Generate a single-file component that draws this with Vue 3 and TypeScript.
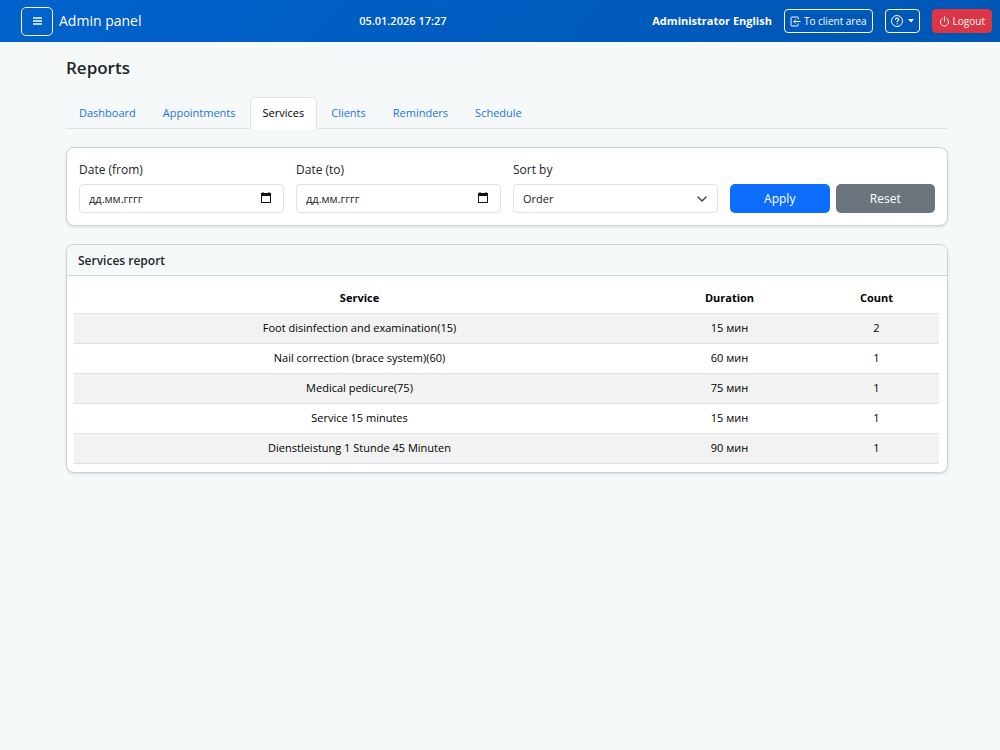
<script setup lang="ts">
import { ref } from 'vue'

interface ReportRow {
  service: string
  duration: number
  count: number
}

const tabs: string[] = ['Dashboard', 'Appointments', 'Services', 'Clients', 'Reminders', 'Schedule']
const activeTab = ref('Services')
const dateFrom = ref('')
const dateTo = ref('')
const sortBy = ref('Order')

const rows: ReportRow[] = [
  { service: 'Foot disinfection and examination(15)', duration: 15, count: 2 },
  { service: 'Nail correction (brace system)(60)', duration: 60, count: 1 },
  { service: 'Medical pedicure(75)', duration: 75, count: 1 },
  { service: 'Service 15 minutes', duration: 15, count: 1 },
  { service: 'Dienstleistung 1 Stunde 45 Minuten', duration: 90, count: 1 },
]

function reset(): void {
  dateFrom.value = ''
  dateTo.value = ''
  sortBy.value = 'Order'
}
</script>

<template>
  <div class="app">
    <header class="navbar">
      <div class="brand">
        <button type="button" class="menu-btn" aria-label="Menu">
          <svg width="9" height="8" viewBox="0 0 9 8" fill="currentColor" aria-hidden="true">
            <path d="M0 0h9v2H0zM0 3h9v2H0zM0 6h9v2H0z" />
          </svg>
        </button>
        <span class="brand-name">Admin panel</span>
      </div>
      <time class="clock" datetime="2026-01-05T17:27">05.01.2026 17:27</time>
      <div class="account">
        <strong class="user">Administrator English</strong>
        <a href="#" class="nav-btn">
          <svg width="11" height="11" viewBox="0 0 16 16" fill="none" stroke="currentColor" stroke-width="1.4" aria-hidden="true">
            <path d="M12 5V2.5a1 1 0 0 0-1-1H2.5a1 1 0 0 0-1 1v11a1 1 0 0 0 1 1H11a1 1 0 0 0 1-1V11M15.5 8H5.5M8.5 5l-3 3 3 3" />
          </svg>
          <span>To client area</span>
        </a>
        <button type="button" class="nav-btn" aria-label="Help">
          <svg width="12" height="12" viewBox="0 0 16 16" fill="none" stroke="currentColor" stroke-width="1.3" aria-hidden="true">
            <circle cx="8" cy="8" r="7.3" />
            <path d="M5.8 6.2C5.8 4.8 6.7 4.1 8 4.1s2.3.8 2.3 2c0 1.6-2.2 1.7-2.2 3.6M8.1 10.9v1.5" stroke-width="1.5" />
          </svg>
          <svg class="caret" width="6" height="4" viewBox="0 0 6 4" fill="currentColor" aria-hidden="true">
            <path d="M0 0h6L3 3.5z" />
          </svg>
        </button>
        <button type="button" class="nav-btn danger">
          <svg width="11" height="11" viewBox="0 0 16 16" fill="none" stroke="currentColor" stroke-width="1.4" stroke-linecap="round" aria-hidden="true">
            <path d="M8 1v7M5 3.4a6 6 0 1 0 6 0" />
          </svg>
          <span>Logout</span>
        </button>
      </div>
    </header>

    <main class="content">
      <h1 class="title">Reports</h1>

      <nav class="tabs">
        <a
          v-for="tab in tabs"
          :key="tab"
          href="#"
          class="tab"
          :class="{ active: tab === activeTab }"
          @click.prevent="activeTab = tab"
        >{{ tab }}</a>
      </nav>

      <form class="card filters" @submit.prevent>
        <div class="field">
          <label for="date-from">Date (from)</label>
          <div class="control-box">
            <input id="date-from" v-model="dateFrom" type="text" class="control" placeholder="дд.мм.гггг" />
            <button type="button" class="picker" aria-label="Pick start date">
              <svg width="10" height="11" viewBox="0 0 10 11" aria-hidden="true">
                <path d="M1.5 0h1v1h5V0h1v1H10v10H0V1h1.5zM1 4v6h8V4z" fill="#111" fill-rule="evenodd" />
              </svg>
            </button>
          </div>
        </div>
        <div class="field">
          <label for="date-to">Date (to)</label>
          <div class="control-box">
            <input id="date-to" v-model="dateTo" type="text" class="control" placeholder="дд.мм.гггг" />
            <button type="button" class="picker" aria-label="Pick end date">
              <svg width="10" height="11" viewBox="0 0 10 11" aria-hidden="true">
                <path d="M1.5 0h1v1h5V0h1v1H10v10H0V1h1.5zM1 4v6h8V4z" fill="#111" fill-rule="evenodd" />
              </svg>
            </button>
          </div>
        </div>
        <div class="field">
          <label for="sort-by">Sort by</label>
          <div class="control-box">
            <select id="sort-by" v-model="sortBy" class="control">
              <option>Order</option>
              <option>Service</option>
              <option>Count</option>
            </select>
            <svg class="chevron" width="10" height="6" viewBox="0 0 10 6" fill="none" stroke="#343a40" stroke-width="1.3" stroke-linecap="round" stroke-linejoin="round" aria-hidden="true">
              <path d="M1 1l4 4 4-4" />
            </svg>
          </div>
        </div>
        <div class="actions">
          <button type="submit" class="btn primary">Apply</button>
          <button type="button" class="btn secondary" @click="reset">Reset</button>
        </div>
      </form>

      <section class="card">
        <h2 class="card-header">Services report</h2>
        <div class="card-body">
          <table class="report">
            <colgroup>
              <col />
              <col class="col-duration" />
              <col class="col-count" />
            </colgroup>
            <thead>
              <tr>
                <th scope="col">Service</th>
                <th scope="col">Duration</th>
                <th scope="col">Count</th>
              </tr>
            </thead>
            <tbody>
              <tr v-for="row in rows" :key="row.service">
                <td>{{ row.service }}</td>
                <td>{{ row.duration }} мин</td>
                <td>{{ row.count }}</td>
              </tr>
            </tbody>
          </table>
        </div>
      </section>
    </main>
  </div>
</template>

<style>
body {
  margin: 0;
  background: #f6f9fa;
}
</style>

<style scoped>
.app {
  min-height: 100vh;
  background: #f6f9fa;
  color: #212529;
  font-family: "Open Sans", "Noto Sans", sans-serif;
  font-size: 12px;
  line-height: 18px;
}

.app *,
.app *::before {
  box-sizing: border-box;
}

button,
input,
select {
  font: inherit;
}

.navbar {
  display: flex;
  align-items: center;
  justify-content: space-between;
  height: 42px;
  padding: 0 8px 0 21px;
  background: linear-gradient(135deg, #0062cc, #0056b3);
  color: #fff;
}

.brand {
  display: flex;
  align-items: center;
  gap: 6px;
  margin-right: 12px;
}

.menu-btn {
  display: flex;
  align-items: center;
  justify-content: center;
  width: 32px;
  height: 29px;
  padding: 0;
  border: 1px solid #f8f9fa;
  border-radius: 5px;
  background: none;
  color: #b9d8f5;
}

.brand-name {
  font-size: 14px;
}

.clock {
  font-size: 11px;
  font-weight: 600;
}

.account {
  display: flex;
  align-items: center;
  justify-content: flex-end;
  gap: 12px;
}

.user {
  font-size: 11px;
  font-weight: 700;
  white-space: nowrap;
}

.nav-btn {
  display: flex;
  align-items: center;
  gap: 3px;
  height: 24px;
  padding: 0 5px;
  border: 1px solid #f8f9fa;
  border-radius: 4px;
  background: none;
  color: #fff;
  font-size: 10px;
  line-height: 16px;
  text-decoration: none;
  white-space: nowrap;
}

.caret {
  margin-left: 2px;
}

.danger {
  padding: 0 6px;
  border-color: #dc3545;
  background: #dc3545;
}

.content {
  padding: 15px 52px 24px 66px;
}

.title {
  margin: 0 0 18px;
  font-size: 17px;
  font-weight: 600;
  line-height: 22px;
}

.tabs {
  display: flex;
  gap: 1px;
  margin-bottom: 18px;
  border-bottom: 1px solid #dee2e6;
}

.tab {
  margin-bottom: -1px;
  padding: 6px 12px;
  border: 1px solid transparent;
  border-radius: 5px 5px 0 0;
  color: #1a73e0;
  font-size: 11px;
  line-height: 18px;
  text-decoration: none;
}

.tab.active {
  border-color: #dee2e6 #dee2e6 #fff;
  background: #fff;
  color: #000;
}

.card {
  margin-bottom: 18px;
  border: 1px solid #ced4d6;
  border-radius: 8px;
  background: #fff;
  box-shadow: 0 1px 3px rgba(0, 0, 0, 0.12);
}

.filters {
  display: grid;
  grid-template-columns: repeat(4, 1fr);
  gap: 12px;
  align-items: end;
  padding: 12px;
}

.field label {
  display: block;
  margin-bottom: 5px;
  font-weight: 500;
  line-height: 19px;
}

.control-box {
  position: relative;
}

.control {
  display: block;
  width: 100%;
  height: 29px;
  padding: 0 9px;
  border: 1px solid #dee2e6;
  border-radius: 4px;
  background: #fff;
  color: #212529;
  font-size: 11px;
  appearance: none;
}

.control::placeholder {
  color: #212529;
  opacity: 1;
}

.picker {
  position: absolute;
  top: 8px;
  right: 13px;
  display: flex;
  padding: 0;
  border: 0;
  background: none;
}

.chevron {
  position: absolute;
  top: 12px;
  right: 11px;
  pointer-events: none;
}

.actions {
  display: flex;
  gap: 6px;
}

.btn {
  flex: 1;
  height: 29px;
  border: 0;
  border-radius: 5px;
  color: #fff;
}

.primary {
  background: #0d6efd;
}

.secondary {
  background: #6c757d;
}

.card-header {
  margin: 0;
  padding: 6px 11px 5px;
  border-bottom: 1px solid #ced4d6;
  border-radius: 7px 7px 0 0;
  background: #f6f9fa;
  font-size: 12px;
  font-weight: 600;
  line-height: 19px;
}

.card-body {
  padding: 7px 8px 8px 7px;
}

.report {
  width: 100%;
  border-collapse: collapse;
  table-layout: fixed;
  color: #000;
  font-size: 11px;
  text-align: center;
}

.col-duration {
  width: 169px;
}

.col-count {
  width: 125px;
}

.report th,
.report td {
  height: 30px;
  padding: 0 6px;
  border-bottom: 1px solid #dee2e6;
}

.report th {
  font-weight: 700;
}

.report tbody tr:nth-child(odd) {
  background: #f2f2f2;
}
</style>
